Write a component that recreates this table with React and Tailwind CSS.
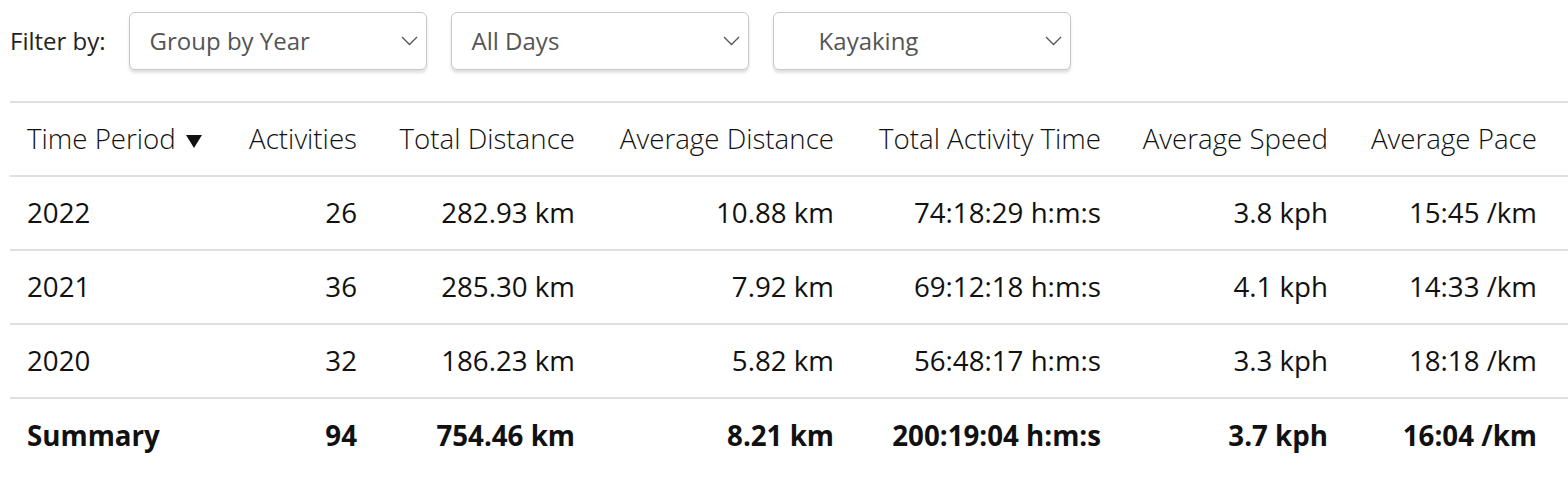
const rows = [
  ["2022", "26", "282.93 km", "10.88 km", "74:18:29 h:m:s", "3.8 kph", "15:45 /km"],
  ["2021", "36", "285.30 km", "7.92 km", "69:12:18 h:m:s", "4.1 kph", "14:33 /km"],
  ["2020", "32", "186.23 km", "5.82 km", "56:48:17 h:m:s", "3.3 kph", "18:18 /km"],
];

const summary = ["Summary", "94", "754.46 km", "8.21 km", "200:19:04 h:m:s", "3.7 kph", "16:04 /km"];

const headers = [
  "Time Period",
  "Activities",
  "Total Distance",
  "Average Distance",
  "Total Activity Time",
  "Average Speed",
  "Average Pace",
];

function Chevron() {
  return (
    <svg width="17" height="10" viewBox="0 0 17 10" fill="none" className="shrink-0">
      <path d="M1 1l7.5 7.5L16 1" stroke="#555" strokeWidth="1.3" />
    </svg>
  );
}

function SortArrow() {
  return (
    <svg width="16" height="13" viewBox="0 0 16 13" className="ml-[10px] inline-block align-[1px]">
      <path d="M0 0h16L8 13z" fill="#111" />
    </svg>
  );
}

function Select({ label, indent }) {
  return (
    <div className="flex h-[58px] w-[298px] items-center justify-between rounded-md border border-[#c8c8c8] bg-white pr-[8px] shadow-[0_3px_3px_rgba(0,0,0,0.12)]">
      <span className={`${indent ? "pl-[45px]" : "pl-[20px]"} text-[24px] text-[#555]`}>{label}</span>
      <Chevron />
    </div>
  );
}

function Cell({ i, children, head, bold }) {
  const align = i === 0 ? "text-left pl-[17px]" : i === 6 ? "text-right pr-[31px]" : "text-right pr-[21px]";
  return (
    <td className={`${align} h-[74px] whitespace-nowrap ${head ? "font-light" : ""} ${bold ? "font-bold" : ""}`}>
      {children}
    </td>
  );
}

export default function App() {
  return (
    <div className="bg-white pl-[10px] pt-[12px] text-[#111]" style={{ fontFamily: '"Open Sans", sans-serif' }}>
      <div className="flex items-center">
        <span className="mr-[23px] text-[24px] text-[#222]">Filter by:</span>
        <div className="flex gap-[24px]">
          <Select label="Group by Year" />
          <Select label="All Days" />
          <Select label="Kayaking" indent />
        </div>
      </div>

      <table className="mt-[31px] w-[1558px] table-fixed border-collapse text-[27.7px]">
        <colgroup>
          <col className="w-[216px]" />
          <col className="w-[152px]" />
          <col className="w-[218px]" />
          <col className="w-[259px]" />
          <col className="w-[267px]" />
          <col className="w-[227px]" />
          <col className="w-[219px]" />
        </colgroup>
        <thead>
          <tr className="border-y-2 border-[#e0e0e0]">
            {headers.map((h, i) => (
              <Cell key={h} i={i} head>
                {h}
                {i === 0 && <SortArrow />}
              </Cell>
            ))}
          </tr>
        </thead>
        <tbody>
          {rows.map((r) => (
            <tr key={r[0]} className="border-b-2 border-[#e0e0e0]">
              {r.map((c, i) => (
                <Cell key={i} i={i}>
                  {c}
                </Cell>
              ))}
            </tr>
          ))}
          <tr>
            {summary.map((c, i) => (
              <Cell key={i} i={i} bold>
                {c}
              </Cell>
            ))}
          </tr>
        </tbody>
      </table>
    </div>
  );
}
